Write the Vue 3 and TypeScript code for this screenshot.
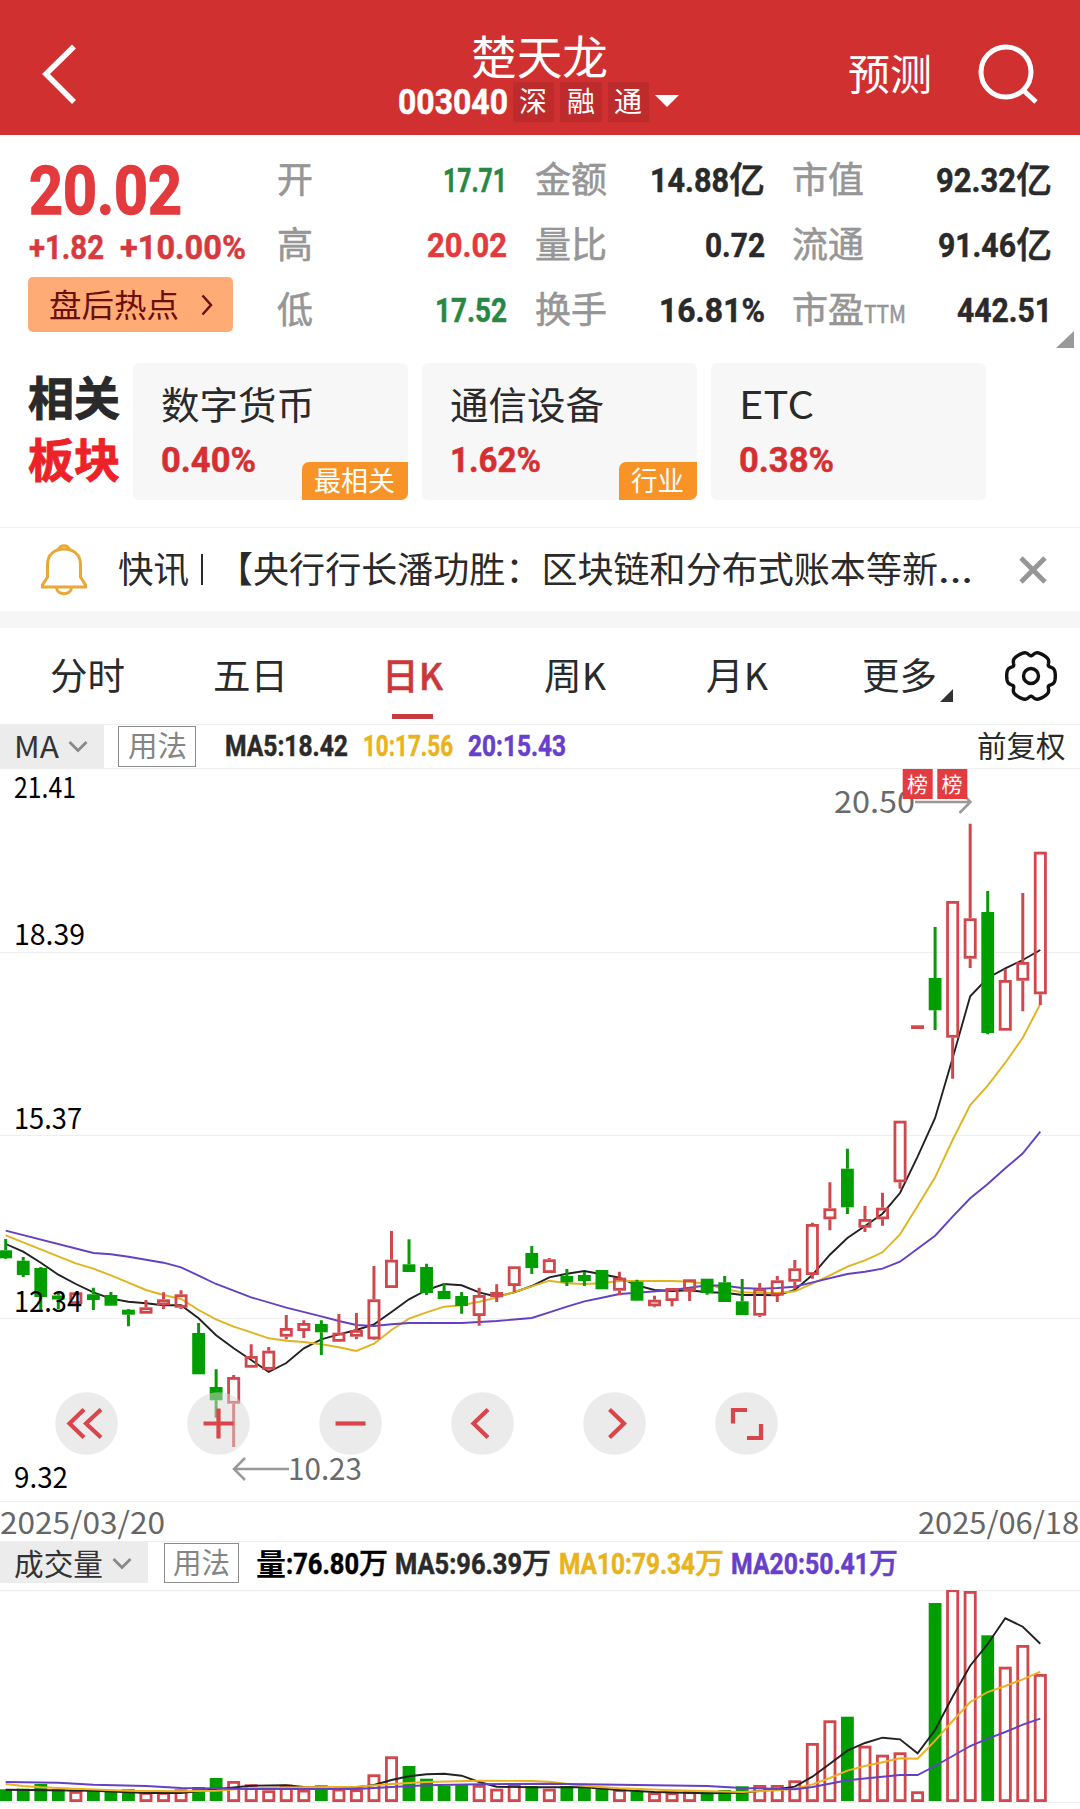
<script setup lang="ts">
import { h, type FunctionalComponent } from 'vue'

interface FitProps { t: string; s: number; w: number }

// Single line of text held to a known advance width; the box is one em tall.
const Fit: FunctionalComponent<FitProps> = (p) =>
  h('svg', { class: 'fit', width: p.w, height: p.s }, [
    h('text', { x: 0, y: p.s * 0.86, 'font-size': p.s, textLength: p.w, lengthAdjust: 'spacingAndGlyphs' }, p.t),
  ])
Fit.props = ['t', 's', 'w']

interface Stat { label: string; lw: number; sub?: string; num: string; nw: number; unit?: string; tone?: string }
const columns: Stat[][] = [
  [
    { label: '开', lw: 36, num: '17.71', nw: 64, tone: 'down' },
    { label: '高', lw: 36, num: '20.02', nw: 80, tone: 'up' },
    { label: '低', lw: 36, num: '17.52', nw: 72, tone: 'down' },
  ],
  [
    { label: '金额', lw: 72, num: '14.88', nw: 79, unit: '亿' },
    { label: '量比', lw: 72, num: '0.72', nw: 60 },
    { label: '换手', lw: 72, num: '16.81%', nw: 106 },
  ],
  [
    { label: '市值', lw: 72, num: '92.32', nw: 80, unit: '亿' },
    { label: '流通', lw: 72, num: '91.46', nw: 78, unit: '亿' },
    { label: '市盈', lw: 72, sub: 'TTM', num: '442.51', nw: 95 },
  ],
]

const sectors = [
  { name: '数字货币', w: 154, pct: '0.40%', pw: 95, badge: '最相关', bw: 81 },
  { name: '通信设备', w: 154, pct: '1.62%', pw: 91, badge: '行业', bw: 53 },
  { name: 'ETC', w: 75, pct: '0.38%', pw: 95 },
]

const tabs = [
  { name: '分时', w: 75 },
  { name: '五日', w: 75 },
  { name: '日K', w: 61, active: true },
  { name: '周K', w: 62 },
  { name: '月K', w: 62 },
  { name: '更多', w: 75, more: true },
]

const pitch = 17.536
const cx = (i: number) => 5.7 + i * pitch

// [rising, high, body top, body bottom, low]
const candles: [number, number, number, number, number][] = [
  [0, 1239, 1250.3, 1258.3, 1259], [0, 1257, 1260.7, 1275, 1277], [0, 1267, 1268, 1297, 1311],
  [0, 1292, 1295.5, 1299.5, 1309], [1, 1292, 1292.3, 1304, 1305], [0, 1287.7, 1294.3, 1300, 1310],
  [0, 1292, 1295, 1305.7, 1306], [0, 1309, 1309.7, 1314.7, 1326.3], [1, 1300, 1307.3, 1313.7, 1313.7],
  [1, 1292.3, 1299.3, 1305.3, 1309], [1, 1290.3, 1294.3, 1307.7, 1309], [0, 1323, 1333, 1374.3, 1374.3],
  [0, 1369.3, 1387, 1400.3, 1417.7], [1, 1375, 1377, 1403.7, 1447], [1, 1344.3, 1356, 1367.7, 1368],
  [1, 1347, 1350.7, 1369.7, 1371], [1, 1315, 1328, 1336.7, 1339.3], [1, 1320.3, 1323, 1331, 1338],
  [0, 1320.3, 1324, 1332.3, 1355], [1, 1314, 1332.7, 1341.7, 1342], [1, 1313, 1330, 1336.7, 1339.3],
  [1, 1266, 1299.3, 1339.3, 1340], [1, 1231, 1259.7, 1288, 1288], [0, 1239.3, 1264.3, 1272, 1272],
  [0, 1263.7, 1267, 1293, 1295], [0, 1283.3, 1291, 1299, 1299], [0, 1292, 1296, 1306, 1313.7],
  [1, 1287.7, 1295, 1316, 1325.7], [1, 1284.3, 1292, 1297.3, 1302], [1, 1266.3, 1266.3, 1286, 1292],
  [0, 1246, 1253, 1268, 1274], [1, 1258, 1259.3, 1273, 1273], [0, 1269, 1276, 1282.3, 1286],
  [0, 1272, 1275, 1281, 1286], [0, 1270, 1270, 1289.3, 1289.3], [1, 1271.7, 1277.7, 1290.7, 1295.3],
  [0, 1279.7, 1281.7, 1300.7, 1301], [1, 1295.7, 1299.7, 1306.3, 1307.3], [1, 1288, 1288, 1301, 1306.3],
  [1, 1279.3, 1279.3, 1291, 1301], [0, 1278.7, 1278.7, 1293, 1294.7], [0, 1276, 1282.3, 1302, 1302],
  [0, 1279, 1301.3, 1315, 1315], [1, 1283, 1288.7, 1315.7, 1317], [1, 1276, 1280.3, 1295.7, 1302],
  [1, 1260, 1268.3, 1281.7, 1289], [1, 1222.7, 1224, 1275, 1278.7], [1, 1182.3, 1208.3, 1219.3, 1230.3],
  [0, 1148.7, 1168.7, 1207.3, 1214], [1, 1206, 1219, 1227.7, 1232], [1, 1192.7, 1207.7, 1219.3, 1225.7],
  [1, 1120.7, 1120.7, 1182.3, 1188.7], [1, 1025.3, 1025.3, 1029, 1029], [0, 927, 978, 1010.3, 1030],
  [1, 901, 901, 1037.7, 1078.7], [1, 823.7, 918.3, 958.7, 968], [0, 891, 912, 1033, 1034.3],
  [1, 969, 980, 1030.7, 1030.7], [1, 893, 962, 980.7, 1011.3], [1, 851.7, 851.7, 994.3, 1005],
]

const volumeTops: number[] = [
  1789.3, 1788.7, 1784, 1789.3, 1791, 1790.7, 1792, 1789.3, 1792, 1792, 1789.3, 1787, 1778, 1781, 1784.3,
  1790.3, 1784.7, 1789.7, 1785.3, 1788.7, 1789.3, 1774.3, 1756.3, 1766, 1778.7, 1786, 1785, 1785, 1788.7, 1783.7,
  1786, 1788.7, 1786, 1787.3, 1788.7, 1789.3, 1791.3, 1792.3, 1792.3, 1791.3, 1792.3, 1790, 1786.3, 1785, 1785,
  1780.3, 1743, 1720.3, 1716.7, 1745.7, 1754.7, 1752.3, 1791.3, 1603, 1589.3, 1591, 1635.3, 1666.7, 1645, 1674,
]

const line = (pts: [number, number][]) => pts.map(([i, y]) => `${cx(i).toFixed(1)},${y}`).join(' ')
const run = (ys: number[]) => line(ys.map((y, i) => [i, y] as [number, number]))

const ma5 = run([
  1244, 1251.7, 1262.7, 1274.7, 1284, 1292.3, 1298.7, 1301.7, 1303.3, 1305.3, 1305.3, 1318.3, 1335.3, 1348.3, 1360,
  1372, 1363, 1348.3, 1339.3, 1334.3, 1330, 1324.3, 1312, 1299.3, 1290, 1284, 1285.3, 1292.3, 1296.7, 1292.3,
  1286, 1277.3, 1273.7, 1271, 1274.3, 1277.7, 1285.3, 1290, 1291, 1290.3, 1292.3, 1292.7, 1295, 1295, 1295.3,
  1290, 1275, 1254.7, 1238, 1226, 1213.7, 1193, 1156.7, 1118, 1058.3, 996.3, 978, 968.3, 960, 950,
])
const ma10 = line([
  [0, 1235.3], [4, 1263.3], [5, 1268.7], [6, 1275.3], [7, 1282.7], [8, 1290], [9, 1295], [10, 1299], [11, 1310],
  [12, 1319.3], [13, 1326.7], [14, 1332.3], [15, 1338.3], [16, 1340.7], [17, 1342], [18, 1344.3], [19, 1347.3],
  [20, 1351], [21, 1343.7], [22, 1330], [23, 1318.7], [24, 1312.3], [25, 1306.7], [26, 1305.3], [27, 1301.7],
  [28, 1297.7], [29, 1292], [30, 1286.3], [31, 1280.7], [32, 1283.3], [33, 1284], [34, 1283.3], [35, 1281],
  [38, 1281], [39, 1281.7], [40, 1284], [41, 1289.3], [42, 1292.3], [43, 1293], [44, 1293], [45, 1291.3],
  [46, 1283.7], [47, 1275.3], [48, 1266.7], [49, 1260.3], [50, 1252.3], [51, 1234.3], [52, 1206], [53, 1177.3],
  [54, 1140], [55, 1105], [56, 1085.7], [57, 1062.7], [58, 1037.7], [59, 1004],
])
const ma20 = line([
  [0, 1230.7], [5, 1253], [6, 1254.3], [7, 1256.7], [8, 1259.7], [9, 1262.7], [10, 1267.3], [11, 1275.7],
  [12, 1284], [14, 1297.3], [16, 1307.7], [18, 1316.3], [19, 1321], [20, 1325], [21, 1326], [22, 1324.3],
  [23, 1323], [26, 1323], [28, 1321], [30, 1318], [31, 1312.3], [32, 1306.7], [33, 1301.3], [34, 1297.7],
  [35, 1294], [36, 1292.7], [38, 1290], [39, 1287.7], [40, 1285.3], [41, 1285.7], [42, 1288], [43, 1288.7],
  [44, 1288], [45, 1286.7], [46, 1282.3], [48, 1274], [49, 1271.7], [50, 1268.7], [51, 1261.7], [53, 1235.7],
  [54, 1216.7], [55, 1198.3], [56, 1184], [57, 1168.3], [58, 1153.3], [59, 1131.7],
])
const vol5 = line([
  [0, 1789.7], [5, 1790.7], [8, 1793], [10, 1793], [12, 1789.3], [14, 1785.7], [16, 1785.3], [17, 1787],
  [20, 1787.3], [21, 1785], [22, 1780], [23, 1776.3], [24, 1774.3], [25, 1773.7], [26, 1775.7], [27, 1782],
  [28, 1786.7], [30, 1787.3], [33, 1787.3], [35, 1790], [37, 1792], [40, 1793.3], [42, 1792.7], [44, 1789.3],
  [45, 1786.7], [46, 1776.7], [47, 1763.7], [48, 1750.7], [49, 1743], [50, 1737.7], [51, 1739.3], [52, 1753.3],
  [53, 1730], [54, 1696.7], [55, 1665.7], [56, 1644], [57, 1618.3], [58, 1626.7], [59, 1643.7],
])
const vol10 = line([
  [0, 1784], [1, 1786], [2, 1787.3], [4, 1788.7], [7, 1790.7], [10, 1791.3], [12, 1790.7], [14, 1788],
  [17, 1787.3], [20, 1786.7], [22, 1784], [24, 1782], [27, 1780.7], [30, 1781], [31, 1781.7], [33, 1786],
  [35, 1788.3], [38, 1790.3], [42, 1792], [44, 1790.3], [45, 1788.7], [46, 1784.3], [47, 1778], [48, 1770.7],
  [49, 1766], [50, 1762.3], [51, 1758.3], [52, 1758.7], [53, 1740.7], [54, 1721], [55, 1702], [56, 1692],
  [57, 1686], [58, 1679.3], [59, 1671.7],
])
const vol20 = line([
  [0, 1782], [3, 1782.7], [5, 1784.7], [8, 1786], [10, 1788], [14, 1789], [20, 1789], [22, 1787], [24, 1785.3],
  [27, 1784.3], [31, 1783.7], [35, 1784.7], [40, 1786], [42, 1788], [45, 1789.3], [46, 1787], [48, 1780.3],
  [50, 1776.7], [51, 1775], [52, 1775], [53, 1766], [55, 1746], [56, 1738.7], [57, 1732], [58, 1724.7], [59, 1718.7],
])

const axis = [
  { v: '21.41', y: 798, w: 62 },
  { v: '18.39', y: 945, w: 71 },
  { v: '15.37', y: 1128.5, w: 68 },
  { v: '12.34', y: 1311.7, w: 68 },
  { v: '9.32', y: 1488, w: 54 },
]

// rewind, zoom in, zoom out, previous, next, full screen
const controls = [
  'M29 17.5L14.500 31.5L29 45.5M46 17.5L31 31.5L46 45.5',
  'M16.5 31.5H46.5M31.5 16.5V46.5',
  'M16.5 31.5H46.5',
  'M37 17.5L22.5 31.5L37 45.5',
  'M26.5 17.5L41 31.5L26.5 45.5',
  'M32 18H18V31.5M46 32V46H32',
]

// Six-toothed cog: a round rim with a narrow dip every 60 degrees.
const gear = Array.from({ length: 121 }, (_, k) => {
  const deg = k * 3
  const dip = (((deg - 30) % 60) + 60) % 60
  const d = Math.min(dip, 60 - dip)
  const r = 24.3 - 4.2 * Math.exp(-((d / 9) ** 2))
  const a = (deg * Math.PI) / 180
  return `${k ? 'L' : 'M'}${(27 + r * Math.cos(a)).toFixed(2)} ${(27 + r * Math.sin(a)).toFixed(2)}`
}).join('') + 'Z'
</script>

<template>
  <div class="page" lang="zh-CN">
    <header class="head">
      <svg class="back" width="40" height="64" viewBox="0 0 40 64"><path d="M34 5.500L6 33L34 61" /></svg>
      <div class="title">
        <Fit t="楚天龙" :s="46" :w="137" />
        <div class="code">
          <Fit class="din" t="003040" :s="35" :w="110" />
          <span v-for="c in ['深', '融', '通']" :key="c" class="tag"><Fit :t="c" :s="28" :w="28" /></span>
          <svg class="caret" width="24" height="12"><path d="M0 0H24L12 12Z" fill="#fff" /></svg>
        </div>
      </div>
      <Fit class="predict" t="预测" :s="42" :w="84" />
      <svg class="search" width="64" height="64" viewBox="0 0 64 64"><circle cx="31" cy="32" r="25" /><path d="M48 50L61 62" /></svg>
    </header>

    <section class="quote">
      <div class="price">
        <Fit class="din heavy up" t="20.02" :s="67" :w="153" />
        <div class="delta"><Fit class="din" t="+1.82" :s="34" :w="75" /><Fit class="din" t="+10.00%" :s="34" :w="126" /></div>
        <div class="hot">
          <Fit t="盘后热点" :s="32" :w="130" />
          <svg width="12" height="22"><path d="M1.500 1.500L10 11L1.500 20.500" /></svg>
        </div>
      </div>
      <div v-for="(col, i) in columns" :key="i" class="stats">
        <div v-for="s in col" :key="s.label" class="stat">
          <Fit class="label" :t="s.label" :s="36" :w="s.lw" />
          <Fit v-if="s.sub" class="label ttm" :t="s.sub" :s="24" :w="42" />
          <span class="fill"></span>
          <Fit class="din" :class="s.tone" :t="s.num" :s="34" :w="s.nw" />
          <Fit v-if="s.unit" class="medium" :t="s.unit" :s="36" :w="36" />
        </div>
      </div>
      <svg class="corner" width="18" height="17"><path d="M18 0V17H0Z" fill="#999" /></svg>
    </section>

    <section class="sectors">
      <div class="related">
        <Fit t="相关" :s="46" :w="92" />
        <Fit class="hotred" t="板块" :s="46" :w="92" />
      </div>
      <div v-for="s in sectors" :key="s.name" class="card">
        <Fit :t="s.name" :s="38" :w="s.w" />
        <Fit class="din pct" :t="s.pct" :s="35" :w="s.pw" />
        <span v-if="s.badge" class="badge"><Fit :t="s.badge" :s="27" :w="s.bw!" /></span>
      </div>
    </section>

    <section class="news">
      <svg class="bell" width="48" height="52" viewBox="0 0 48 52">
        <path d="M7.500 33V20.500C7.500 10.500 14.500 5 24 5S40.500 10.500 40.500 20.500V33L45.500 41V43H2.500V41Z" />
        <path d="M19 5.500C19 .5 29 .5 29 5.500M16.500 44C17.500 51.500 30.500 51.500 31.500 44" />
      </svg>
      <Fit t="快讯" :s="36" :w="71" />
      <i class="bar"></i>
      <Fit t="【央行行长潘功胜：区块链和分布式账本等新" :s="36" :w="721" />
      <Fit t="..." :s="36" :w="35" />
      <svg class="close" width="28" height="28"><path d="M2 2L26 26M26 2L2 26" /></svg>
    </section>

    <nav class="tabs">
      <div v-for="t in tabs" :key="t.name" class="tab" :class="{ active: t.active }">
        <Fit :t="t.name" :s="37" :w="t.w" />
        <svg v-if="t.more" class="more" width="13" height="13"><path d="M13 0V13H0Z" fill="#333" /></svg>
      </div>
      <svg class="gear" width="54" height="54"><path :d="gear" /><circle cx="27" cy="27" r="7.500" /></svg>
    </nav>

    <div class="indicator">
      <div class="select ma"><Fit t="MA" :s="30" :w="45" /><svg width="20" height="13"><path d="M1.500 2L10 10.500L18.500 2" /></svg></div>
      <div class="usage"><Fit t="用法" :s="29" :w="59" /></div>
      <Fit class="din" t="MA5:18.42" :s="29" :w="123" />
      <Fit class="din yellow" t="10:17.56" :s="29" :w="90" />
      <Fit class="din purple" t="20:15.43" :s="29" :w="98" />
      <Fit class="adjust" t="前复权" :s="29.500" :w="88.500" />
    </div>

    <div class="kline">
      <svg class="plot" width="1080" height="733" viewBox="0 769 1080 733">
        <path class="grid" d="M0 952.500H1080M0 1135.500H1080M0 1318.500H1080" />
        <g class="lines"><polyline :points="ma5" stroke="#222" /><polyline :points="ma10" stroke="#e0b41f" /><polyline :points="ma20" stroke="#6440c4" /></g>
        <g v-for="(c, i) in candles" :key="i" :class="c[0] ? 'rise' : 'fall'">
          <path :d="`M${cx(i)} ${c[1]}V${c[2]}M${cx(i)} ${c[3]}V${c[4]}`" />
          <rect v-if="c[0]" :x="cx(i) - 5.1" :y="c[2] + 1.4" width="10.200" :height="Math.max(c[3] - c[2] - 2.8, 0.6)" />
          <rect v-else :x="cx(i) - 6.4" :y="c[2]" width="12.800" :height="c[3] - c[2]" />
        </g>
        <g class="axis"><text v-for="a in axis" :key="a.v" x="14" :y="a.y" :textLength="a.w" lengthAdjust="spacingAndGlyphs">{{ a.v }}</text></g>
        <g class="mark">
          <text x="834" y="813.300" textLength="81" lengthAdjust="spacingAndGlyphs">20.50</text>
          <path d="M915 802H970M959.500 790.500L970.500 802L959.500 813" />
          <text x="288" y="1480" textLength="74" lengthAdjust="spacingAndGlyphs">10.23</text>
          <path d="M289 1469H234M245 1458L234 1469L245 1480" />
        </g>
        <g class="rank">
          <rect x="902.700" y="769" width="30" height="30" /><rect x="937.300" y="769" width="30" height="30" />
          <text x="907" y="792">榜</text><text x="941.600" y="792">榜</text>
        </g>
      </svg>
      <div class="controls">
        <svg v-for="(d, i) in controls" :key="i" width="63" height="63"><circle cx="31.500" cy="31.500" r="31.300" /><path :d="d" /></svg>
      </div>
    </div>

    <div class="dates"><Fit t="2025/03/20" :s="30" :w="165" /><Fit t="2025/06/18" :s="30" :w="161" /></div>

    <div class="indicator volbar">
      <div class="select vol"><Fit t="成交量" :s="30" :w="89" /><svg width="20" height="13"><path d="M1.500 2L10 10.500L18.500 2" /></svg></div>
      <div class="usage"><Fit t="用法" :s="29" :w="57" /></div>
      <div class="pair black"><Fit class="bold" t="量" :s="30" :w="30" /><Fit class="din" t=":76.80" :s="29" :w="73" /><Fit class="medium" t="万" :s="29" :w="29" /></div>
      <div class="pair"><Fit class="din" t="MA5:96.39" :s="29" :w="127" /><Fit class="medium" t="万" :s="29" :w="29" /></div>
      <div class="pair yellow"><Fit class="din" t="MA10:79.34" :s="29" :w="136" /><Fit class="medium" t="万" :s="29" :w="29" /></div>
      <div class="pair purple"><Fit class="din" t="MA20:50.41" :s="29" :w="138" /><Fit class="medium" t="万" :s="29" :w="29" /></div>
    </div>

    <svg class="volume" width="1080" height="219" viewBox="0 1590 1080 219">
      <path class="grid" d="M0 1590.700H1080M0 1802.500H1080" />
      <g v-for="(c, i) in candles" :key="i" :class="c[0] ? 'rise' : 'fall'">
        <rect v-if="c[0]" :x="cx(i) - 5.1" :y="volumeTops[i] + 1.4" width="10.200" :height="1799.500 - volumeTops[i] - 0.3" />
        <rect v-else :x="cx(i) - 6.4" :y="volumeTops[i]" width="12.800" :height="1801 - volumeTops[i]" />
      </g>
      <g class="lines"><polyline :points="vol5" stroke="#222" /><polyline :points="vol10" stroke="#eeb020" /><polyline :points="vol20" stroke="#6440c4" /></g>
    </svg>
  </div>
</template>

<style>
body { background: #fff; }
.fit { display: block; flex: none; overflow: visible; fill: currentColor; }
.fit.din { font-family: Roboto, "Liberation Sans", sans-serif; font-weight: 700; stroke: currentColor; stroke-width: 0.5; }
.fit.din.heavy { stroke-width: 1.4; }
.fit.medium { font-weight: 500; stroke: currentColor; stroke-width: 0.5; }
.fit.bold { font-weight: 700; }
</style>

<style scoped>
.page { width: 1080px; height: 1809px; overflow: hidden; background: #fff; color: #2a2a2a; font-family: "Noto Sans CJK SC", "Noto Sans", sans-serif; }
.page svg { display: block; flex: none; }
.up { color: #e23a3d; }
.down { color: #288843; }
.yellow { color: #e8b31d; }
.purple { color: #6640cc; }
.black { color: #000; }

.head { height: 135px; display: flex; background: #d03130; color: #fff; }
.back { margin: 41px 0 0 40px; fill: none; stroke: #fff; stroke-width: 5.5; }
.title { margin: 34px 0 0 318px; width: 284px; flex: none; }
.title > .fit { margin-left: 72.5px; }
.code { display: flex; align-items: center; margin-top: 1.5px; gap: 6px; margin-left: -0.5px; }
.code > .fit { margin-right: -1px; }
.tag { width: 41.5px; height: 40px; background: #be2b2c; display: flex; align-items: center; justify-content: center; }
.caret { margin-top: -2px; }
.predict { margin: 53.5px 0 0 166px; }
.search { margin: 40px 0 0 43px; fill: none; stroke: #fff; stroke-width: 5; }

.quote { height: 215px; display: flex; position: relative; }
.price { width: 250px; padding: 21px 0 0 28px; flex: none; }
.price > .fit { margin-left: 1px; }
.delta { display: flex; gap: 16px; margin: 7px 0 0 0.5px; color: #d8393e; }
.hot { margin-top: 13px; width: 184px; height: 55px; padding-left: 21px; background: #feab76; border-radius: 5px; display: flex; align-items: center; gap: 22px; color: #6b0f0b; }
.hot path { fill: none; stroke: #6b0f0b; stroke-width: 2.5; }
.stats { width: 229px; flex: none; padding-top: 12.5px; margin-right: 29px; }
.stats:nth-of-type(3) { margin-right: 28px; }
.stats:nth-of-type(4) { width: 259px; margin-right: 0; }
.stat { height: 65px; display: flex; align-items: center; }
.stat > .label:first-child { margin-left: -1px; }
.label { color: #969696; stroke: #969696; stroke-width: 0.6; }
.ttm { margin-top: 7px; }
.fill { flex: 1; }
.corner { position: absolute; right: 6px; bottom: 2px; }

.sectors { height: 178px; display: flex; border-bottom: 1px solid #f2f2f2; box-sizing: border-box; gap: 14px; }
.related { width: 91px; padding: 25px 0 0 27.5px; font-weight: 700; display: flex; flex-direction: column; gap: 16px; stroke: currentColor; stroke-width: 0.9; }
.related > .fit { margin-left: 0; }
.hotred { color: #ec2228; stroke: #ec2228; }
.card { position: relative; width: 275px; height: 137.5px; margin-top: 12.5px; border-radius: 6px; background: #f7f7f7; padding: 23.5px 0 0 28px; box-sizing: border-box; flex: none; }
.card:nth-of-type(1) { margin-left: 0; }
.pct { margin-top: 17.5px; color: #d62f33; }
.badge { position: absolute; right: 0; bottom: 0; padding: 0 12.5px; height: 38px; display: flex; align-items: center; background: #f89427; color: #fff; border-radius: 7px 0 7px 0; }

.news { height: 83px; display: flex; align-items: center; border-bottom: 17px solid #f6f6f6; }
.bell { margin: 0 30px 0 40px; fill: none; stroke: #e8a838; stroke-width: 3; }
.bar { width: 2px; height: 31px; background: #2a2a2a; margin: 0 14px 0 12px; }
.close { margin-left: 45.5px; fill: none; stroke: #969696; stroke-width: 4.8; }

.tabs { height: 96px; display: flex; align-items: center; position: relative; border-bottom: 1px solid #eee; }
.tab { position: relative; width: 162.4px; height: 96px; display: flex; align-items: center; justify-content: center; flex: none; }
.tab:first-child { margin-left: 6.5px; }
.tab.active { color: #cb383b; font-weight: 500; stroke: #cb383b; stroke-width: 0.5; }
.tab.active::after { content: ""; position: absolute; left: 60.5px; bottom: 5px; width: 41px; height: 5px; background: #c43c3f; }
.more { position: absolute; right: 28px; bottom: 22px; }
.gear { margin-left: 23.5px; fill: none; stroke: #111; stroke-width: 3.4; stroke-linejoin: round; }

.indicator { height: 44px; display: flex; align-items: center; border-bottom: 1px solid #eee; box-sizing: border-box; }
.select { background: #ececec; height: 44px; display: flex; align-items: center; padding-left: 14px; gap: 9px; box-sizing: border-box; flex: none; color: #333; }
.select.ma { width: 104px; }
.select path { fill: none; stroke: #888; stroke-width: 2.8; }
.usage { width: 78px; height: 41px; margin: 0 28.5px 0 14px; border: 1.5px solid #8c8c8c; box-sizing: border-box; display: flex; align-items: center; justify-content: center; color: #858585; flex: none; }
.indicator > .din { margin: -2px 15px 0 0; }
.adjust { margin-left: auto; margin-right: 15px; }

.kline { height: 733px; position: relative; border-bottom: 1px solid #eee; box-sizing: border-box; }
.plot { overflow: visible; }
.grid { stroke: #eee; stroke-width: 1.2; }
.lines polyline { fill: none; stroke-width: 1.9; }
.rise path, .rise rect { fill: none; stroke: #d0474c; stroke-width: 2.8; }
.rise path, .fall path { stroke-width: 3; }
.fall path { stroke: #0a980a; }
.fall rect { fill: #009e00; }
.axis { font-size: 29px; fill: #000; }
.mark text { font-size: 30.5px; fill: #6a6a6a; }
.mark path { fill: none; stroke: #999; stroke-width: 2.5; }
.rank rect { fill: #e23b40; }
.rank text { font-size: 21px; fill: #fff; }
.controls { position: absolute; left: 55px; top: 623px; display: flex; gap: 69px; }
.controls circle { fill: rgba(215, 215, 215, 0.5); }
.controls path { fill: none; stroke: #d9454a; stroke-width: 4.2; }

.dates { height: 40px; display: flex; justify-content: space-between; padding: 6px 1px 0 0; box-sizing: border-box; color: #666; border-bottom: 1px solid #eee; }
.volbar { height: 48px; align-items: flex-start; border-bottom: 0; }
.volbar .select { width: 148px; height: 41px; padding-top: 2px; }
.volbar .usage { width: 75px; height: 40px; margin: 1px 16.5px 0 16px; }
.pair { display: flex; align-items: center; height: 43px; margin-right: 7.5px; flex: none; }
</style>
